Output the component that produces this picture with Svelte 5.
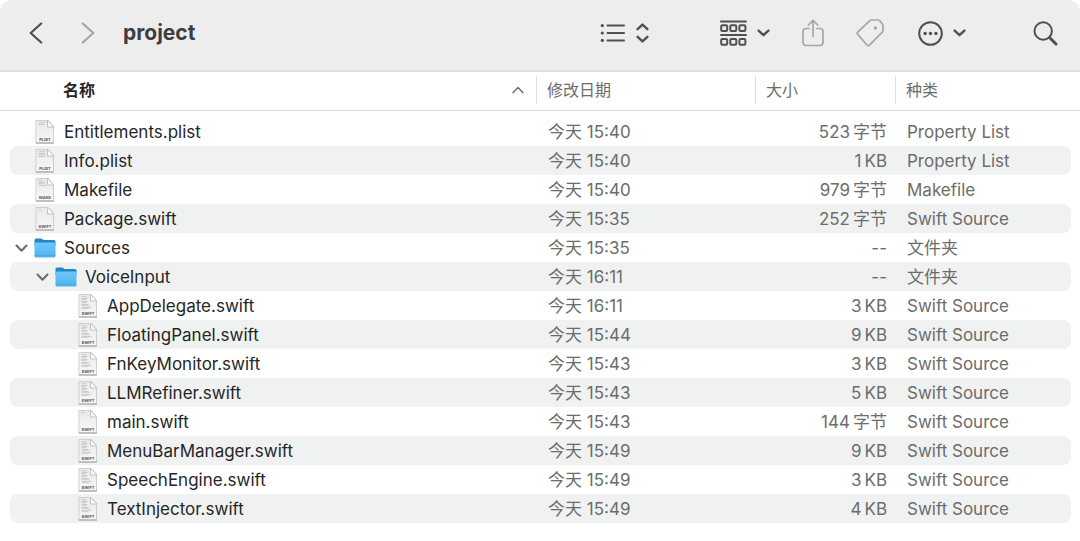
<script lang="ts">
  interface Entry {
    name: string;
    depth: number;
    parent?: string;
    tag?: string;
    // widths of the grey text lines drawn on the document icon
    lines?: number[];
    time: string;
    size: string;
    unit?: string;
    kind: string;
  }

  const code = [5, 6, 4, 6, 5, 7, 8, 10, 7];

  const entries: Entry[] = [
    { name: 'Entitlements.plist', depth: 0, tag: 'PLIST', lines: [7, 6], time: '15:40', size: '523', unit: '字节', kind: 'Property List' },
    { name: 'Info.plist', depth: 0, tag: 'PLIST', lines: [7, 6, 7, 7], time: '15:40', size: '1', unit: 'KB', kind: 'Property List' },
    { name: 'Makefile', depth: 0, tag: 'MAKE', lines: [4, 7, 5, 8], time: '15:40', size: '979', unit: '字节', kind: 'Makefile' },
    { name: 'Package.swift', depth: 0, tag: 'SWIFT', lines: [3], time: '15:35', size: '252', unit: '字节', kind: 'Swift Source' },
    { name: 'Sources', depth: 0, time: '15:35', size: '--', kind: '文件夹' },
    { name: 'VoiceInput', depth: 1, parent: 'Sources', time: '16:11', size: '--', kind: '文件夹' },
    { name: 'AppDelegate.swift', depth: 2, parent: 'VoiceInput', tag: 'SWIFT', lines: code, time: '16:11', size: '3', unit: 'KB', kind: 'Swift Source' },
    { name: 'FloatingPanel.swift', depth: 2, parent: 'VoiceInput', tag: 'SWIFT', lines: code, time: '15:44', size: '9', unit: 'KB', kind: 'Swift Source' },
    { name: 'FnKeyMonitor.swift', depth: 2, parent: 'VoiceInput', tag: 'SWIFT', lines: code, time: '15:43', size: '3', unit: 'KB', kind: 'Swift Source' },
    { name: 'LLMRefiner.swift', depth: 2, parent: 'VoiceInput', tag: 'SWIFT', lines: code, time: '15:43', size: '5', unit: 'KB', kind: 'Swift Source' },
    { name: 'main.swift', depth: 2, parent: 'VoiceInput', tag: 'SWIFT', lines: [3], time: '15:43', size: '144', unit: '字节', kind: 'Swift Source' },
    { name: 'MenuBarManager.swift', depth: 2, parent: 'VoiceInput', tag: 'SWIFT', lines: code, time: '15:49', size: '9', unit: 'KB', kind: 'Swift Source' },
    { name: 'SpeechEngine.swift', depth: 2, parent: 'VoiceInput', tag: 'SWIFT', lines: code, time: '15:49', size: '3', unit: 'KB', kind: 'Swift Source' },
    { name: 'TextInjector.swift', depth: 2, parent: 'VoiceInput', tag: 'SWIFT', lines: code, time: '15:49', size: '4', unit: 'KB', kind: 'Swift Source' }
  ];

  let closed: string[] = $state([]);

  let visible = $derived(entries.filter((entry) => isShown(entry)));

  function isShown(entry: Entry): boolean {
    if (!entry.parent) return true;
    if (closed.includes(entry.parent)) return false;
    const parent = entries.find((e) => e.name === entry.parent);
    return parent ? isShown(parent) : true;
  }

  function toggle(name: string) {
    closed = closed.includes(name) ? closed.filter((n) => n !== name) : [...closed, name];
  }
</script>

{#snippet chevron()}
  <svg width="13" height="8" viewBox="0 0 13 8" class="bold">
    <path d="M1.6 1.6 6.5 6.2 11.4 1.6" />
  </svg>
{/snippet}

<div class="window">
  <header class="toolbar">
    <nav class="history">
      <button aria-label="后退">
        <svg width="14" height="22" viewBox="0 0 14 22" class="nav">
          <path d="M12.2 1.5 1.7 11 12.2 20.5" />
        </svg>
      </button>
      <button aria-label="前进" class="dim">
        <svg width="14" height="22" viewBox="0 0 14 22" class="nav">
          <path d="M1.8 1.5 12.3 11 1.8 20.5" />
        </svg>
      </button>
    </nav>
    <h1>project</h1>

    <div class="tools">
      <button aria-label="显示" class="view">
        <svg width="26" height="20" viewBox="0 0 26 20">
          <g fill="currentColor" stroke="none">
            <circle cx="2.3" cy="2.6" r="1.6" />
            <circle cx="2.3" cy="10" r="1.6" />
            <circle cx="2.3" cy="17.4" r="1.6" />
          </g>
          <path d="M7.5 2.6H24M7.5 10H24M7.5 17.4H24" />
        </svg>
        <svg width="13" height="20" viewBox="0 0 13 20" class="bold">
          <path d="M1.6 6.2 6.5 1.6 11.4 6.2M1.6 13.8 6.5 18.4 11.4 13.8" />
        </svg>
      </button>
      <button aria-label="分组" class="group">
        <svg width="27" height="26" viewBox="0 0 27 26">
          <path d="M1 1.4H26M1 15.1H26" />
          {#each [1.2, 10.3, 19.4] as x}
            <rect {x} y="5.2" width="6" height="5.8" rx="1.2" />
            <rect {x} y="18.9" width="6" height="5.8" rx="1.2" />
          {/each}
        </svg>
        {@render chevron()}
      </button>
      <button aria-label="共享" class="share dim">
        <svg width="22" height="28" viewBox="0 0 22 28" class="thin">
          <path d="M7 9.5H4A3 3 0 0 0 1 12.5V23.5A3 3 0 0 0 4 26.5H18A3 3 0 0 0 21 23.5V12.5A3 3 0 0 0 18 9.5H15" />
          <path d="M11 17.5V1.5M6.3 6 11 1.3 15.7 6" />
        </svg>
      </button>
      <button aria-label="编辑标签" class="label dim">
        <svg width="28" height="28" viewBox="0 0 28 28" class="thin">
          <path d="M1.6 15.1Q.8 14.2 1.7 13.1L13.3 2.1Q14.4 1 16 1H21.8Q22.8 1 23.6 1.7L26 4.3Q27 5.3 27 6.6V11.3Q27 12.4 26.1 13.3L13.5 26.1Q12.4 27.2 11.1 26.2Z" />
          <circle cx="19.4" cy="9" r="1.7" fill="currentColor" stroke="none" />
        </svg>
      </button>
      <button aria-label="操作" class="more">
        <svg width="25" height="25" viewBox="0 0 25 25">
          <circle cx="12.5" cy="12.5" r="11.3" />
          <g fill="currentColor" stroke="none">
            <circle cx="7.1" cy="12.5" r="1.7" />
            <circle cx="12.5" cy="12.5" r="1.7" />
            <circle cx="17.9" cy="12.5" r="1.7" />
          </g>
        </svg>
        {@render chevron()}
      </button>
      <button aria-label="搜索">
        <svg width="25" height="25" viewBox="0 0 25 25">
          <circle cx="10.2" cy="10" r="8.7" />
          <path d="M16.5 16.5 23 23" stroke-width="3" />
        </svg>
      </button>
    </div>
  </header>

  <table>
    <thead>
      <tr>
        <th class="name" aria-sort="ascending">
          <div class="sorted">
            名称
            <svg width="12" height="8" viewBox="0 0 12 8">
              <path d="M1 6.7 6 1.5 11 6.7" />
            </svg>
          </div>
        </th>
        <th class="date"><div>修改日期</div></th>
        <th class="size"><div>大小</div></th>
        <th class="kind"><div>种类</div></th>
      </tr>
    </thead>
    <tbody>
      {#each visible as entry (entry.name)}
        <tr>
          <td class="name">
            <div class="entry depth-{entry.depth}">
              {#if entry.tag}
                <svg class="icon" width="22" height="25" viewBox="0 0 22 25">
                  <path d="M2.300 1.500H14L19.500 7.500V24H2.300Z" fill="url(#paper)" stroke="#cbcbcb" stroke-width=".9" />
                  <path d="M2.300 24H19.500" stroke="#9c9c9c" stroke-width="1.2" />
                  <path d="M13.500 1.500V8H19.500Z" fill="#fbfbfb" stroke="#bdbdbd" stroke-width=".9" />
                  {#each entry.lines ?? [] as width, i}
                    <rect x="4.500" y={3.5 + i * 1.5} {width} height=".6" fill="#b4b4b4" stroke="none" />
                  {/each}
                  <text x="11" y="21.500">{entry.tag}</text>
                </svg>
              {:else}
                <button
                  class="disclosure"
                  class:closed={closed.includes(entry.name)}
                  aria-label={entry.name}
                  aria-expanded={!closed.includes(entry.name)}
                  onclick={() => toggle(entry.name)}
                >
                  <svg width="13" height="8" viewBox="0 0 13 8">
                    <path d="M1.5 1.5 6.5 6.8 11.5 1.5" />
                  </svg>
                </button>
                <svg class="icon" width="22" height="20" viewBox="0 0 22 20">
                  <path d="M.5 2A1.5 1.5 0 0 1 2 .5H7Q7.8 .5 8.5 1.2L9.5 2H20A1.5 1.5 0 0 1 21.500 3.500V8H.5Z" fill="#2387c7" stroke="none" />
                  <rect x=".5" y="4.5" width="21" height="15" rx="1.5" fill="url(#folder)" stroke="none" />
                  <path d="M1 17.5H21" stroke="#4aa5dd" stroke-width=".8" />
                </svg>
              {/if}
              <span>{entry.name}</span>
            </div>
          </td>
          <td class="date">今天 {entry.time}</td>
          <td class="size">
            <div class="amount">
              <span>{entry.size}</span>
              {#if entry.unit}<span>{entry.unit}</span>{/if}
            </div>
          </td>
          <td class="kind">{entry.kind}</td>
        </tr>
      {/each}
    </tbody>
  </table>
</div>

<svg class="defs" width="0" height="0" aria-hidden="true">
  <linearGradient id="paper" x1="0" y1="0" x2="0" y2="1">
    <stop offset="0" stop-color="#e9e9e9" />
    <stop offset="1" stop-color="#f8f8f8" />
  </linearGradient>
  <linearGradient id="folder" x1="0" y1="0" x2="0" y2="1">
    <stop offset="0" stop-color="#6ac8fb" />
    <stop offset="1" stop-color="#51b3ef" />
  </linearGradient>
</svg>

<style>
  :global(body) {
    margin: 0;
    background: #fff;
  }

  .window {
    min-height: 100vh;
    font-family: Inter, 'Noto Sans CJK SC', sans-serif;
    font-size: 17px;
    color: #6c6c6c;
    background: #fff;
  }

  .toolbar {
    display: flex;
    align-items: center;
    box-sizing: border-box;
    height: 72px;
    padding: 0 22px 4px 29px;
    background: #ededed;
    border-bottom: 2px solid #dfdfdf;
    border-radius: 12px 12px 0 0;
  }

  button {
    display: flex;
    align-items: center;
    padding: 0;
    border: 0;
    background: none;
    color: #505050;
  }

  svg {
    display: block;
    flex: none;
    fill: none;
    stroke: currentColor;
    stroke-width: 2;
    stroke-linecap: round;
    stroke-linejoin: round;
  }

  .nav {
    stroke-width: 2.2;
  }

  .bold {
    stroke-width: 2.4;
  }

  .thin {
    stroke-width: 1.7;
  }

  .dim {
    color: #a6a6a6;
  }

  .history {
    display: flex;
    gap: 38px;
  }

  h1 {
    margin: 0 0 0 28px;
    font-size: 21px;
    font-weight: 700;
    line-height: 28px;
    color: #3d3d3d;
  }

  .tools {
    display: flex;
    align-items: center;
    margin-left: auto;
  }

  .view {
    gap: 10px;
    margin-right: 71px;
  }

  .group {
    gap: 10px;
    margin-right: 32px;
  }

  .share {
    margin-right: 32px;
  }

  .label {
    margin-right: 34px;
  }

  .more {
    gap: 10px;
    margin-right: 67px;
  }

  table {
    width: 100%;
    table-layout: fixed;
    border-spacing: 0;
  }

  th {
    height: 38px;
    padding: 0;
    border-bottom: 1px solid #d8d8d8;
    font-size: 16px;
    font-weight: 400;
    line-height: 28px;
    text-align: left;
    vertical-align: top;
  }

  th div {
    margin-top: 4px;
    padding-left: 10px;
    border-left: 1px solid #dcdcdc;
  }

  th .sorted {
    display: flex;
    align-items: center;
    justify-content: space-between;
    padding: 0 12px 0 63px;
    border-left: 0;
    font-weight: 700;
    color: #262626;
  }

  .sorted svg {
    color: #6c6c6c;
    stroke-width: 1.4;
  }

  th.date {
    width: 219px;
  }

  th.size {
    width: 140px;
  }

  th.kind {
    width: 185px;
  }

  tbody::before {
    content: '';
    display: block;
    height: 6px;
  }

  tbody tr {
    clip-path: inset(0 9px 0 10px round 8px);
  }

  tbody tr:nth-child(even) {
    background: #f0f2f1;
  }

  td {
    height: 29px;
    padding: 0 0 0 12px;
    line-height: 28px;
    white-space: nowrap;
  }

  td.name {
    padding: 0;
    color: #262626;
  }

  td.size {
    padding: 0 8px 0 0;
  }

  .entry {
    display: flex;
    align-items: center;
    height: 29px;
    padding-left: 34px;
  }

  .depth-1 {
    padding-left: 55px;
  }

  .depth-2 {
    padding-left: 77px;
  }

  .icon {
    margin-right: 8px;
  }

  .icon text {
    fill: #555;
    stroke: none;
    font-size: 4px;
    font-weight: 700;
    text-anchor: middle;
  }

  .disclosure {
    width: 13px;
    margin: 0 6px 0 -19px;
    color: #6c6c6c;
  }

  .closed {
    transform: rotate(-90deg);
  }

  .amount {
    display: flex;
    justify-content: flex-end;
    gap: 3px;
  }

  .defs {
    position: absolute;
  }
</style>
